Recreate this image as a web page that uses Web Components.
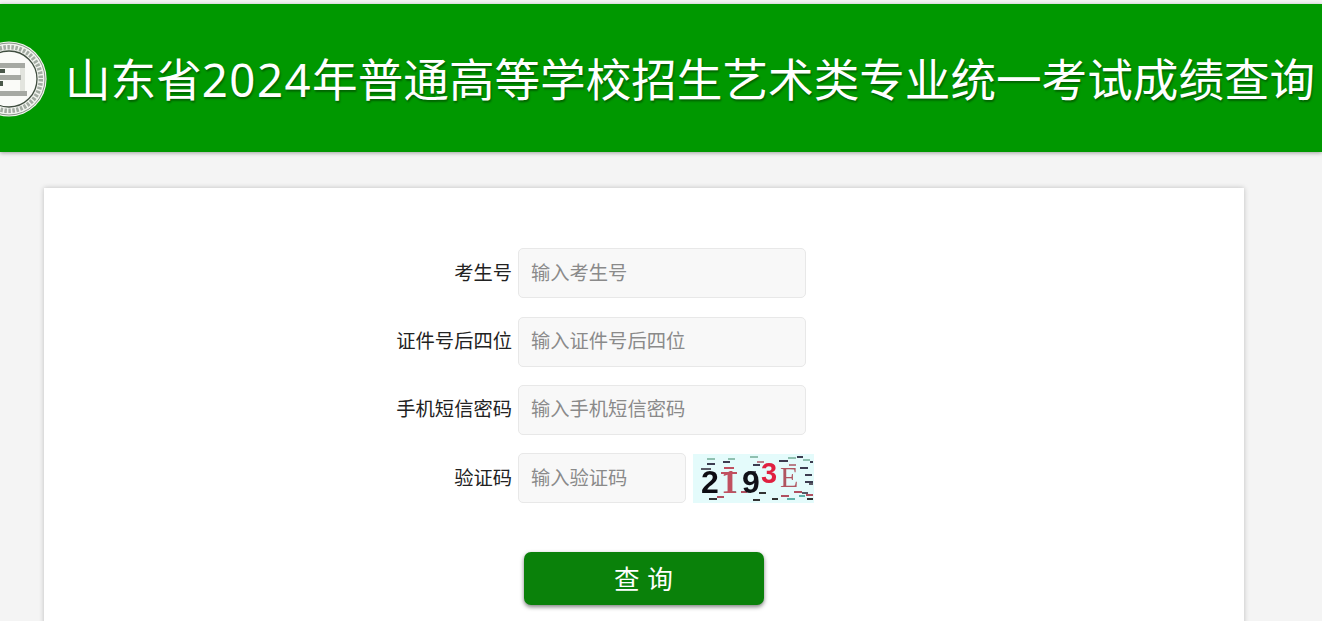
<!DOCTYPE html>
<html lang="zh"><head><meta charset="utf-8"><style>
html,body{margin:0;padding:0;background:#f4f4f4;height:621px;overflow:hidden;font-family:"Noto Sans CJK SC","Noto Sans",sans-serif}
</style></head><body>
<exam-page></exam-page>
<script>
const FONT='"Noto Sans CJK SC","Noto Sans",sans-serif';
class ExamLogo extends HTMLElement{constructor(){super();this.attachShadow({mode:'open'}).innerHTML=`<style>:host{display:block;width:76px;height:76px;flex:none}svg{display:block;filter:blur(.6px)}</style>
<svg width="76" height="76" viewBox="0 0 76 76">
<circle cx="38" cy="38" r="37.6" fill="#f2f4ef"/>
<circle cx="38" cy="38" r="36" fill="none" stroke="#8a958a" stroke-width="1"/>
<circle cx="38" cy="38" r="31.8" fill="none" stroke="#a3aca3" stroke-width="4.5" stroke-dasharray="2.5 1.5"/>
<circle cx="38" cy="38" r="28" fill="#fafbf8" stroke="#3f4d3f" stroke-width="1.3"/>
<path d="M49 27h5V50h-5Z" fill="#e2e4de"/>
<path d="M12 22H54V27H12ZM12 34H50V39H12ZM12 50H56V55H12Z" fill="#a6a9a3"/>
<path d="M12 28H34V32H12ZM12 40H32V45H12Z" fill="#4a584a"/>
</svg>`}}
customElements.define('exam-logo',ExamLogo);
class ExamHeader extends HTMLElement{constructor(){super();this.attachShadow({mode:'open'}).innerHTML=`<style>:host{display:flex;align-items:center;box-sizing:border-box;height:148px;margin-top:4px;background:#009800;box-shadow:0 1px 4px rgba(0,0,0,.35);overflow:hidden}
exam-logo{margin-left:-29px;margin-top:1px}
h1{margin:0 0 0 18px;padding-top:4px;font:400 45.6px/1 "Noto Sans",${FONT};color:#fff;white-space:nowrap;text-shadow:1px 2px 2px rgba(0,0,0,.35)}
::slotted(span){letter-spacing:1.5px}</style>
<exam-logo></exam-logo><h1><slot></slot></h1>`}}
customElements.define('exam-header',ExamHeader);
class ExamField extends HTMLElement{constructor(){super();const w=this.getAttribute('width')||'288';this.attachShadow({mode:'open'}).innerHTML=`<style>:host{display:flex;align-items:center;height:50px;font:400 19.3px/1 ${FONT};color:#222}
label{width:123px;text-align:right;margin-right:6px;flex:none;white-space:nowrap;padding-bottom:var(--pb,1px)}
.in{box-sizing:border-box;width:${w}px;height:50px;background:#f8f8f8;border:1px solid #e8e8e8;border-radius:5px;padding:0 12px var(--pb,1px);display:flex;align-items:center;color:#8a8a8a;white-space:nowrap;flex:none}
.extra{margin-left:7px;display:flex}</style>
<label>${this.getAttribute('label')}</label><div class="in">${this.getAttribute('ph')}</div><div class="extra"><slot></slot></div>`}}
customElements.define('exam-field',ExamField);
class ExamCaptcha extends HTMLElement{constructor(){super();this.attachShadow({mode:'open'}).innerHTML=`<style>:host{display:block;width:121px;height:49px;overflow:hidden}svg{display:block;filter:blur(.6px)}</style>
<svg width="121" height="49" viewBox="0 0 121 49">
<rect x="-3" y="-3" width="127" height="55" fill="#e4fbfb"/>
<g stroke-width="2">
<path d="M14 5h8M35 5h7M57 3h8M95 4h8M110 6h7" stroke="#8fc0b0"/>
<path d="M14 10h8M30 8h7M60 11h7M86 7h9M104 3h6" stroke="#3c3c50"/>
<path d="M64 8h7M96 11h7" stroke="#b9808a"/>
<path d="M107 14h8M117 8h3M112 21h7M112 28h8" stroke="#3c3c50"/>
<path d="M8 15h10M55 18h8M109 39h6M116 30h4" stroke="#5a5a66"/>
<path d="M24 43h7M48 38h6M88 42h8M101 38h8M113 41h7" stroke="#b05060"/>
<path d="M16 45h8M60 46h7M66 39h7M79 45h6M114 45h6" stroke="#333"/>
<path d="M36 38h7M94 45h8M106 42h6" stroke="#5fb0a8"/>
</g>
<path d="M28 19h16M31 14h10" stroke="#c05060" stroke-width="2"/>
<text x="8" y="39" font-family="'Liberation Sans',sans-serif" font-weight="700" font-size="32" fill="#0c0c12">2</text>
<text x="28" y="39" font-family="'Liberation Serif',serif" font-weight="700" font-size="34" fill="#c05060">1</text>
<text x="49" y="39" font-family="'Liberation Sans',sans-serif" font-weight="700" font-size="32" fill="#111118">9</text>
<text x="68" y="29" font-family="'Liberation Sans',sans-serif" font-weight="700" font-size="29" fill="#e02040">3</text>
<text x="87" y="33" font-family="'Liberation Serif',serif" font-size="30" fill="#b05560">E</text>
</svg>`}}
customElements.define('exam-captcha',ExamCaptcha);
class ExamButton extends HTMLElement{constructor(){super();this.attachShadow({mode:'open'}).innerHTML=`<style>:host{display:flex;align-items:center;justify-content:center;width:240px;height:53px;background:#0a810a;border-radius:7px;box-shadow:0 2px 4px rgba(0,0,0,.5);color:#fff;font:400 25.6px/1 ${FONT};white-space:pre;box-sizing:border-box;padding-bottom:2px;letter-spacing:1px}</style><slot></slot>`}}
customElements.define('exam-button',ExamButton);
class ExamForm extends HTMLElement{constructor(){super();this.attachShadow({mode:'open'}).innerHTML=`<style>:host{display:block;box-sizing:border-box;width:1200px;height:460px;margin:36px 0 0 44px;background:#fff;box-shadow:0 0 5px rgba(0,0,0,.22);padding:60px 0 0 345px}
.rows{display:flex;flex-direction:column;gap:18px;align-items:flex-start}
::slotted(exam-field:nth-child(2)){margin-top:1px}
exam-button{margin:49px 0 0 135px}</style>
<div class="rows"><slot></slot></div><exam-button>查 询</exam-button>`}}
customElements.define('exam-form',ExamForm);
class ExamPage extends HTMLElement{constructor(){super();this.attachShadow({mode:'open'}).innerHTML=`<style>:host{display:block}</style>
<exam-header>山东省<span>2024</span>年普通高等学校招生艺术类专业统一考试成绩查询</exam-header>
<exam-form>
<exam-field label="考生号" ph="输入考生号"></exam-field>
<exam-field label="证件号后四位" ph="输入证件号后四位" style="--pb:2px"></exam-field>
<exam-field label="手机短信密码" ph="输入手机短信密码" style="--pb:2px"></exam-field>
<exam-field label="验证码" ph="输入验证码" width="168"><exam-captcha></exam-captcha></exam-field>
</exam-form>`}}
customElements.define('exam-page',ExamPage);
</script></body></html>
